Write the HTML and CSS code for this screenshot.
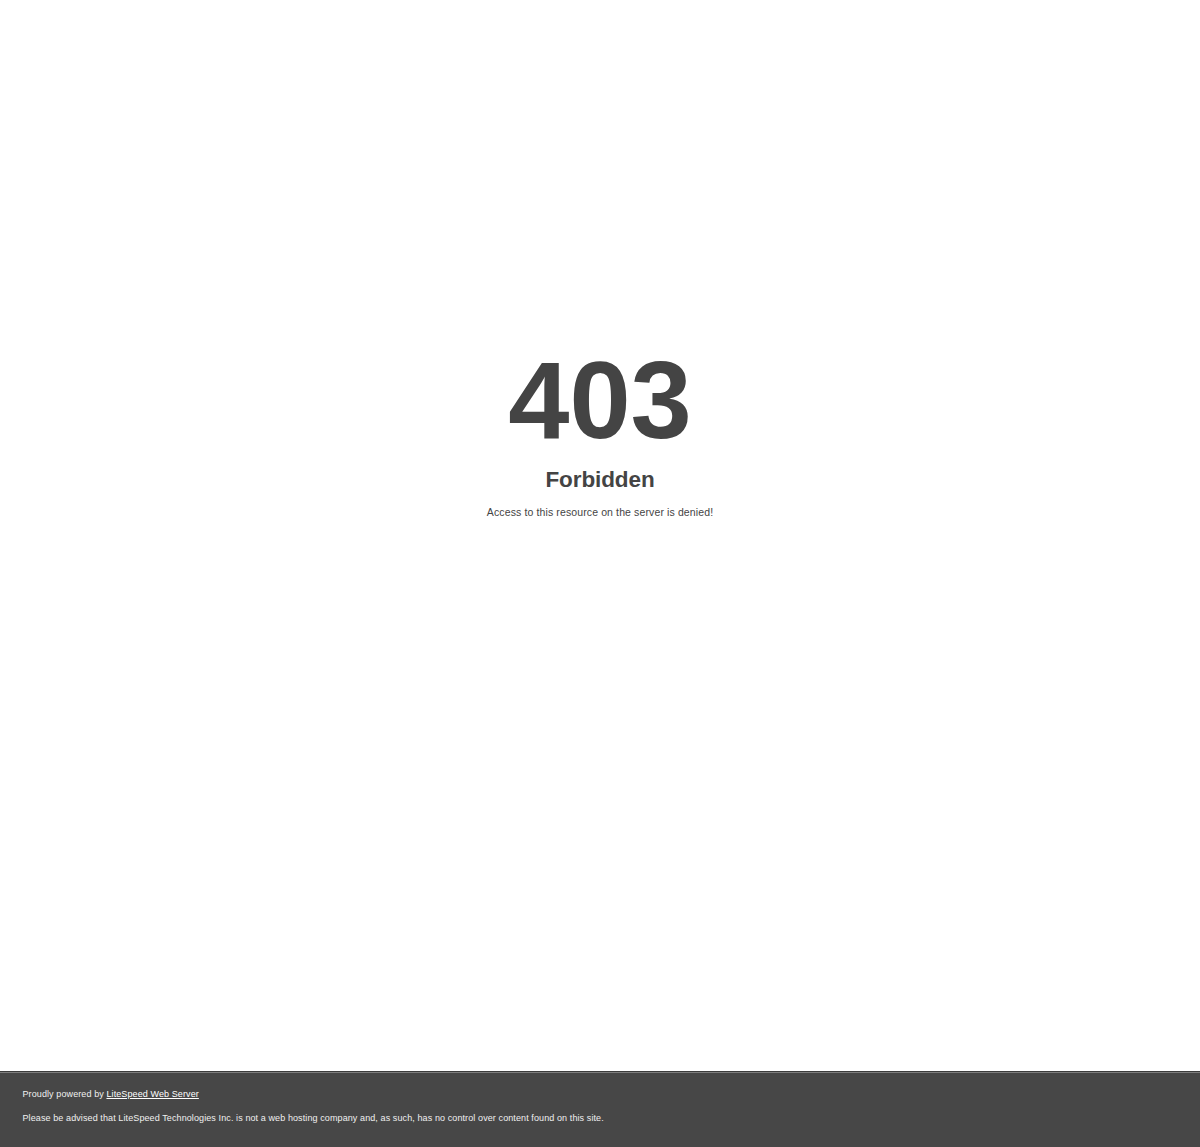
FILE: index.html
```html
<!DOCTYPE html>
<html>
<head>
<meta charset="utf-8">
<title>403 Forbidden</title>
<link rel="stylesheet" href="styles.css">
</head>
<body>
<div class="page">
  <div class="message">
    <h1 class="code">403</h1>
    <h2 class="title">Forbidden</h2>
    <p class="desc">Access to this resource on the server is denied!</p>
  </div>
</div>
<div class="footer">
  <br>Proudly powered by  <a class="footer-link" href="#">LiteSpeed Web Server</a><p class="notice">Please be advised that LiteSpeed Technologies Inc. is not a web hosting company and, as such, has no control over content found on this site.</p>
</div>
</body>
</html>
```
FILE: styles.css
```css
html {
  height: 100%;
}
body {
  color: #444;
  margin: 0;
  font: normal 10.5px/15px "Liberation Sans", Arial, Helvetica, sans-serif;
  height: 100%;
  background-color: #fff;
}
.page {
  min-height: 100%;
  box-sizing: border-box;
  padding-top: 30vh;
  display: flex;
  justify-content: center;
}
.message {
  width: 600px;
  text-align: center;
}
.code {
  margin: 0;
  font-size: 110px;
  line-height: 112.5px;
  font-weight: bold;
}
.title {
  margin-top: 15px;
  margin-bottom: 18.7px;
  font-size: 22.5px;
  font-weight: bold;
  letter-spacing: -0.1px;
}
.desc {
  margin: 10.5px 0;
  letter-spacing: 0.12px;
}
.footer {
  color: #f0f0f0;
  font-size: 9px;
  letter-spacing: 0.1px;
  margin: auto;
  padding: 0 22.5px;
  position: relative;
  clear: both;
  height: 75px;
  margin-top: -75.75px;
  background-color: #474747;
  border-top: 1px solid rgba(0, 0, 0, 0.15);
  box-shadow: 0 1px 0 rgba(255, 255, 255, 0.3) inset;
}
.footer-link {
  color: #fff;
}
.notice {
  margin: 9px 0;
}
```
